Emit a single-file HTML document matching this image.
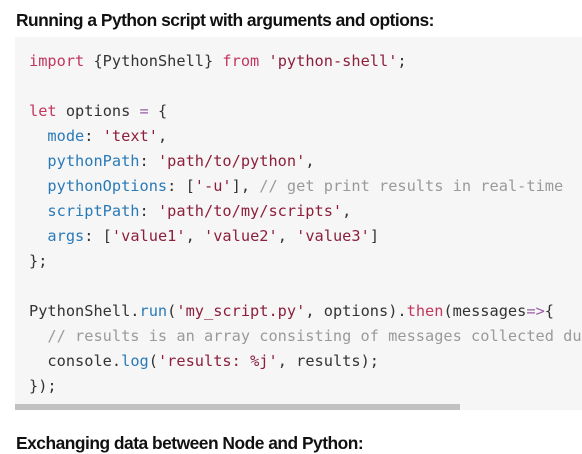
<!DOCTYPE html>
<html><head><meta charset="utf-8"><style>
body{margin:0;background:#fff;width:582px;height:451px;overflow:hidden;position:relative}
h3{position:absolute;left:16px;margin:0;font:bold 17.4px "Liberation Sans","Noto Sans CJK KR",sans-serif;letter-spacing:-0.5px;color:#111}
.code{position:absolute;left:15px;top:37px;width:567px;height:373px;background:#f6f6f6;overflow:hidden}
pre{margin:0;position:absolute;left:14px;top:12px;font:15.3px/25px "DejaVu Sans Mono",monospace;color:#333;white-space:pre}
.k{color:#c3365e}.s{color:#8c1f3c}.p{color:#2a7ab8}.c{color:#9a9a9a}.o{color:#9a5ea8}
.sb{position:absolute;left:0;top:367px;width:445px;height:6px;background:#c1c1c1}
</style></head><body>
<h3 style="top:10px">Running a Python script with arguments and options:</h3>
<div class="code"><pre><span class="k">import</span> {PythonShell} <span class="k">from</span> <span class="s">'python-shell'</span>;

<span class="k">let</span> options <span class="o">=</span> {
  <span class="p">mode</span>: <span class="s">'text'</span>,
  <span class="p">pythonPath</span>: <span class="s">'path/to/python'</span>,
  <span class="p">pythonOptions</span>: [<span class="s">'-u'</span>], <span class="c">// get print results in real-time</span>
  <span class="p">scriptPath</span>: <span class="s">'path/to/my/scripts'</span>,
  <span class="p">args</span>: [<span class="s">'value1'</span>, <span class="s">'value2'</span>, <span class="s">'value3'</span>]
};

PythonShell.<span class="p">run</span>(<span class="s">'my_script.py'</span>, options).<span class="k">then</span>(messages<span class="o">=&gt;</span>{
  <span class="c">// results is an array consisting of messages collected during execution</span>
  console.<span class="p">log</span>(<span class="s">'results: %j'</span>, results);
});</pre><div class="sb"></div></div>
<h3 style="top:433px">Exchanging data between Node and Python:</h3>
</body></html>
